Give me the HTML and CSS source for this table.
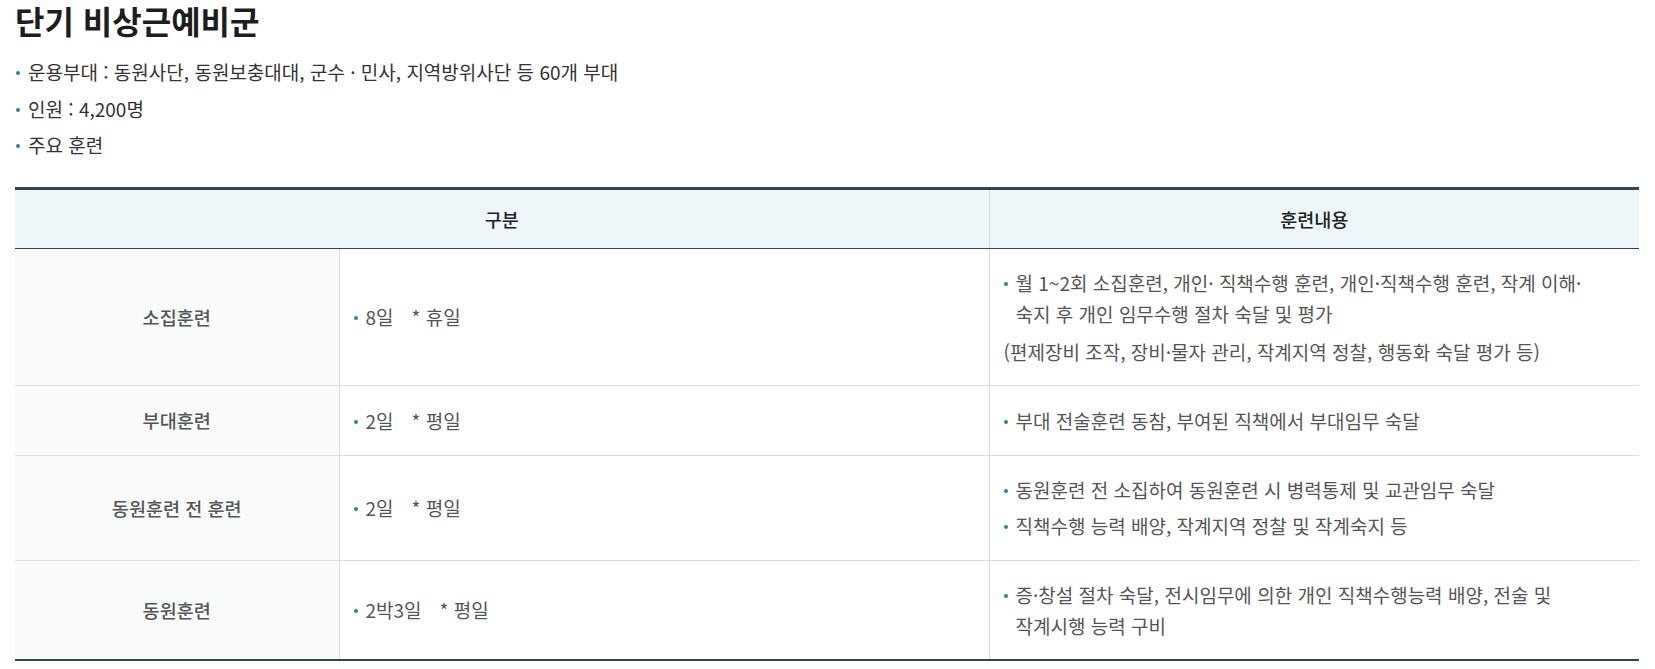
FILE: index.html
```html
<!DOCTYPE html>
<html lang="ko">
<head>
<meta charset="utf-8">
<title>단기 비상근예비군</title>
<link rel="stylesheet" href="styles.css">
</head>
<body>
<main class="page">
  <h2 class="title">단기 비상근예비군</h2>
  <ul class="dot-list summary">
    <li>운용부대 : 동원사단, 동원보충대대, 군수 · 민사, 지역방위사단 등 60개 부대</li>
    <li>인원 : 4,200명</li>
    <li>주요 훈련</li>
  </ul>
  <table class="train-table">
    <colgroup>
      <col class="c1">
      <col class="c2">
      <col class="c3">
    </colgroup>
    <thead>
      <tr>
        <th colspan="2">구분</th>
        <th>훈련내용</th>
      </tr>
    </thead>
    <tbody>
      <tr>
        <th scope="row">소집훈련</th>
        <td><ul class="dot-list"><li>8일<span class="note">* 휴일</span></li></ul></td>
        <td>
          <ul class="dot-list"><li>월 1~2회 소집훈련, 개인· 직책수행 훈련, 개인·직책수행 훈련, 작계 이해· 숙지 후 개인 임무수행 절차 숙달 및 평가</li></ul>
          <p class="sub">(편제장비 조작, 장비·물자 관리, 작계지역 정찰, 행동화 숙달 평가 등)</p>
        </td>
      </tr>
      <tr>
        <th scope="row">부대훈련</th>
        <td><ul class="dot-list"><li>2일<span class="note">* 평일</span></li></ul></td>
        <td><ul class="dot-list"><li>부대 전술훈련 동참, 부여된 직책에서 부대임무 숙달</li></ul></td>
      </tr>
      <tr>
        <th scope="row">동원훈련 전 훈련</th>
        <td><ul class="dot-list"><li>2일<span class="note">* 평일</span></li></ul></td>
        <td><ul class="dot-list">
          <li>동원훈련 전 소집하여 동원훈련 시 병력통제 및 교관임무 숙달</li>
          <li>직책수행 능력 배양, 작계지역 정찰 및 작계숙지 등</li>
        </ul></td>
      </tr>
      <tr>
        <th scope="row">동원훈련</th>
        <td><ul class="dot-list"><li>2박3일<span class="note">* 평일</span></li></ul></td>
        <td><ul class="dot-list"><li>증·창설 절차 숙달, 전시임무에 의한 개인 직책수행능력 배양, 전술 및 작계시행 능력 구비</li></ul></td>
      </tr>
    </tbody>
  </table>
</main>
</body>
</html>
```

FILE: styles.css
```css
html, body {
  margin: 0;
  padding: 0;
  background: #ffffff;
}

body {
  font-family: "Noto Sans CJK KR", "Noto Sans", sans-serif;
  color: #333333;
  font-size: 19px;
  line-height: 30.6px;
}

.page {
  padding: 0 16px 0 15px;
}

.title {
  margin: 0;
  font-size: 32px;
  line-height: 40px;
  font-weight: 700;
  color: #1d1d1d;
}

.dot-list {
  list-style: none;
  margin: 0;
  padding: 0;
}

.dot-list li {
  display: flex;
  gap: 8px;
  word-break: keep-all;
}

.dot-list li + li {
  margin-top: 6px;
}

.dot-list li::before {
  content: "";
  flex: none;
  width: 4px;
  height: 4px;
  margin-top: 14px;
  border-radius: 50%;
  background: #1a8ba5;
}

.summary {
  margin-top: 17px;
  margin-left: 1px;
}

.summary li {
  gap: 8px;
  color: #333333;
}

.train-table {
  width: 100%;
  margin-top: 26px;
  border-collapse: collapse;
  table-layout: fixed;
  border-top: 3px solid #2f474f;
  border-bottom: 2px solid #2f474f;
}

.c1 { width: 324px; }
.c2 { width: 650px; }
.c3 { width: 650px; }

.train-table thead th {
  background: #eef6f9;
  font-size: 18.56px;
  font-weight: 500;
  color: #222222;
  padding: 14px 14px;
  text-align: center;
  border-bottom: 1px solid #2f474f;
  border-left: 1px solid #dcdcdc;
}

.train-table thead th:first-child {
  border-left: none;
}

.train-table tbody tr + tr > * {
  border-top: 1px solid #dddddd;
}

.train-table tbody th {
  background: #f9fbfb;
  font-size: 18.56px;
  font-weight: 500;
  color: #555555;
  text-align: center;
  vertical-align: middle;
  padding: 19px 14px;
}

.train-table td {
  padding: 19px 30px 18px 14px;
  vertical-align: middle;
  color: #555555;
  border-left: 1px solid #dcdcdc;
}

.train-table td .dot-list li {
  gap: 8px;
}

.note {
  margin-left: 10px;
}

.sub {
  margin: 7px 0 0;
  word-break: keep-all;
}
```
